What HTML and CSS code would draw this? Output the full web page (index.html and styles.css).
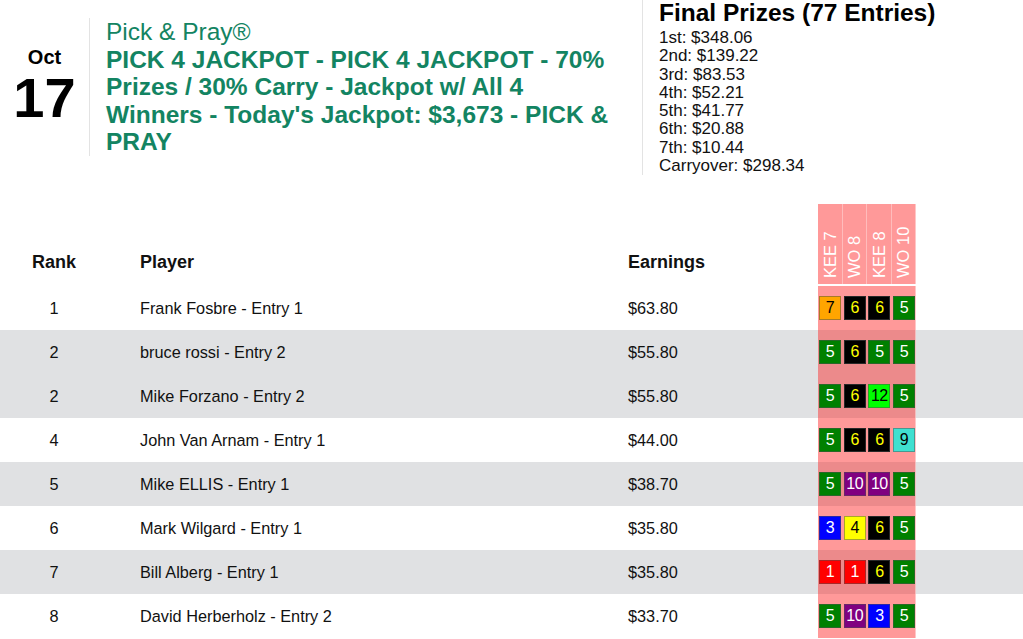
FILE: index.html
```html
<!DOCTYPE html>
<html lang="en">
<head>
<meta charset="utf-8">
<title>Pick &amp; Pray</title>
<link rel="stylesheet" href="styles.css">
</head>
<body>
<header class="top">
  <div class="event">
    <div class="date">
      <div class="mon">Oct</div>
      <div class="day">17</div>
    </div>
    <div class="title">
      <div class="brand">Pick &amp; Pray®</div>
      <div class="desc">PICK 4 JACKPOT - PICK 4 JACKPOT - 70% Prizes / 30% Carry - Jackpot w/ All 4 Winners - Today's Jackpot: $3,673 - PICK &amp; PRAY</div>
    </div>
  </div>
  <div class="prizes">
    <h2 class="prizes-title">Final Prizes (77 Entries)</h2>
    <div class="prize">1st: $348.06</div>
    <div class="prize">2nd: $139.22</div>
    <div class="prize">3rd: $83.53</div>
    <div class="prize">4th: $52.21</div>
    <div class="prize">5th: $41.77</div>
    <div class="prize">6th: $20.88</div>
    <div class="prize">7th: $10.44</div>
    <div class="prize">Carryover: $298.34</div>
  </div>
</header>

<table class="board">
  <colgroup>
    <col class="c-rank"><col class="c-player"><col class="c-earn"><col class="c-picks"><col class="c-rest">
  </colgroup>
  <thead>
    <tr>
      <th class="rank">Rank</th>
      <th class="player">Player</th>
      <th class="earn">Earnings</th>
      <th class="picks-head">
        <div class="races">
          <div class="race"><span>KEE 7</span></div>
          <div class="race"><span>WO 8</span></div>
          <div class="race"><span>KEE 8</span></div>
          <div class="race"><span>WO 10</span></div>
        </div>
      </th>
      <th></th>
    </tr>
  </thead>
  <tbody>
    <tr>
      <td class="rank">1</td><td class="player">Frank Fosbre - Entry 1</td><td class="earn">$63.80</td>
      <td class="picks"><div class="boxes"><span class="b orange">7</span><span class="b black">6</span><span class="b black">6</span><span class="b green">5</span></div></td><td></td>
    </tr>
    <tr class="alt">
      <td class="rank">2</td><td class="player">bruce rossi - Entry 2</td><td class="earn">$55.80</td>
      <td class="picks"><div class="boxes"><span class="b green">5</span><span class="b black">6</span><span class="b green">5</span><span class="b green">5</span></div></td><td></td>
    </tr>
    <tr class="alt">
      <td class="rank">2</td><td class="player">Mike Forzano - Entry 2</td><td class="earn">$55.80</td>
      <td class="picks"><div class="boxes"><span class="b green">5</span><span class="b black">6</span><span class="b lime">12</span><span class="b green">5</span></div></td><td></td>
    </tr>
    <tr>
      <td class="rank">4</td><td class="player">John Van Arnam - Entry 1</td><td class="earn">$44.00</td>
      <td class="picks"><div class="boxes"><span class="b green">5</span><span class="b black">6</span><span class="b black">6</span><span class="b turq">9</span></div></td><td></td>
    </tr>
    <tr class="alt">
      <td class="rank">5</td><td class="player">Mike ELLIS - Entry 1</td><td class="earn">$38.70</td>
      <td class="picks"><div class="boxes"><span class="b green">5</span><span class="b purple">10</span><span class="b purple">10</span><span class="b green">5</span></div></td><td></td>
    </tr>
    <tr>
      <td class="rank">6</td><td class="player">Mark Wilgard - Entry 1</td><td class="earn">$35.80</td>
      <td class="picks"><div class="boxes"><span class="b blue">3</span><span class="b yellow">4</span><span class="b black">6</span><span class="b green">5</span></div></td><td></td>
    </tr>
    <tr class="alt">
      <td class="rank">7</td><td class="player">Bill Alberg - Entry 1</td><td class="earn">$35.80</td>
      <td class="picks"><div class="boxes"><span class="b red">1</span><span class="b red">1</span><span class="b black">6</span><span class="b green">5</span></div></td><td></td>
    </tr>
    <tr>
      <td class="rank">8</td><td class="player">David Herberholz - Entry 2</td><td class="earn">$33.70</td>
      <td class="picks"><div class="boxes"><span class="b green">5</span><span class="b purple">10</span><span class="b blue">3</span><span class="b green">5</span></div></td><td></td>
    </tr>
  </tbody>
</table>
</body>
</html>
```

FILE: styles.css
```css
html, body {
  margin: 0;
  padding: 0;
  background: #ffffff;
}

body {
  font-family: "Liberation Sans", Arial, Helvetica, sans-serif;
  color: #111111;
  overflow: hidden;
}

/* ---------- header ---------- */
.top {
  display: flex;
  height: 175px;
}

.event {
  display: flex;
  align-items: center;
  align-self: flex-start;
  margin-top: 18px;
  width: 642px;
}

.date {
  width: 89px;
  text-align: center;
  font-weight: bold;
  color: #000000;
}

.mon {
  font-size: 20px;
  line-height: 20px;
  margin-bottom: 3px;
}

.day {
  font-size: 56px;
  line-height: 56px;
}

.title {
  flex: 1;
  border-left: 1px solid #e3e3e3;
  padding: 0 28px 0 16px;
  color: #138462;
  font-size: 24.5px;
  line-height: 27.6px;
}

.desc {
  font-weight: bold;
}

.prizes {
  border-left: 1px solid #e3e3e3;
  padding-left: 16px;
  flex: 1;
}

.prizes-title {
  margin: 0 0 3px;
  font-size: 24.5px;
  line-height: 26px;
  font-weight: bold;
  color: #000000;
}

.prize {
  font-size: 17px;
  line-height: 18.3px;
}

/* ---------- table ---------- */
.board {
  width: 100%;
  margin-top: 29px;
  border-collapse: collapse;
  table-layout: fixed;
  font-size: 16.3px;
}

.c-rank { width: 108px; }
.c-player { width: 520px; }
.c-earn { width: 190px; }
.c-picks { width: 98px; }

.board th {
  font-size: 18px;
  font-weight: bold;
  vertical-align: bottom;
  padding: 0 0 13px;
  height: 82px;
  box-sizing: border-box;
  text-align: left;
}

.board th.rank,
.board td.rank {
  text-align: center;
}

.board th.player,
.board td.player {
  padding-left: 32px;
}

.board td {
  height: 44px;
  padding: 0;
  box-sizing: border-box;
  vertical-align: middle;
}

.board tr.alt td {
  background: #e0e1e3;
}

.board th.picks-head {
  padding: 0 0 2px;
  vertical-align: top;
}

.races {
  display: flex;
  height: 80px;
  background: rgba(255, 0, 0, 0.4);
  border-right: 1px solid rgba(255, 255, 255, 0.45);
}

.race {
  flex: 1;
  display: flex;
  justify-content: center;
  border-left: 1px solid rgba(255, 255, 255, 0.35);
}

.race:first-child {
  border-left: 0;
}

.race span {
  writing-mode: vertical-rl;
  transform: rotate(180deg);
  font-size: 16.5px;
  font-weight: normal;
  line-height: 18px;
  color: #ffffff;
  padding-top: 6px;
  white-space: nowrap;
}

.board td.picks {
  background: rgba(255, 0, 0, 0.4);
  box-shadow: inset -1px 0 0 rgba(255, 255, 255, 0.45);
  padding: 0 1px;
}

.board tr.alt td.picks {
  background: #ec8a8b;
}

.boxes {
  display: flex;
  justify-content: space-between;
}

.b {
  width: 22px;
  height: 24px;
  box-sizing: border-box;
  border: 1px solid rgba(80, 80, 80, 0.5);
  font-size: 16px;
  line-height: 22px;
  text-align: center;
  letter-spacing: -0.6px;
}

.orange { background: #ffa500; color: #000000; }
.black  { background: #000000; color: #ffff00; }
.green  { background: #008000; color: #ffffff; }
.lime   { background: #00ff00; color: #000000; }
.turq   { background: #40e0d0; color: #000000; }
.purple { background: #800080; color: #ffffff; }
.blue   { background: #0000ff; color: #ffffff; }
.yellow { background: #ffff00; color: #000000; }
.red    { background: #ff0000; color: #ffffff; }
```
